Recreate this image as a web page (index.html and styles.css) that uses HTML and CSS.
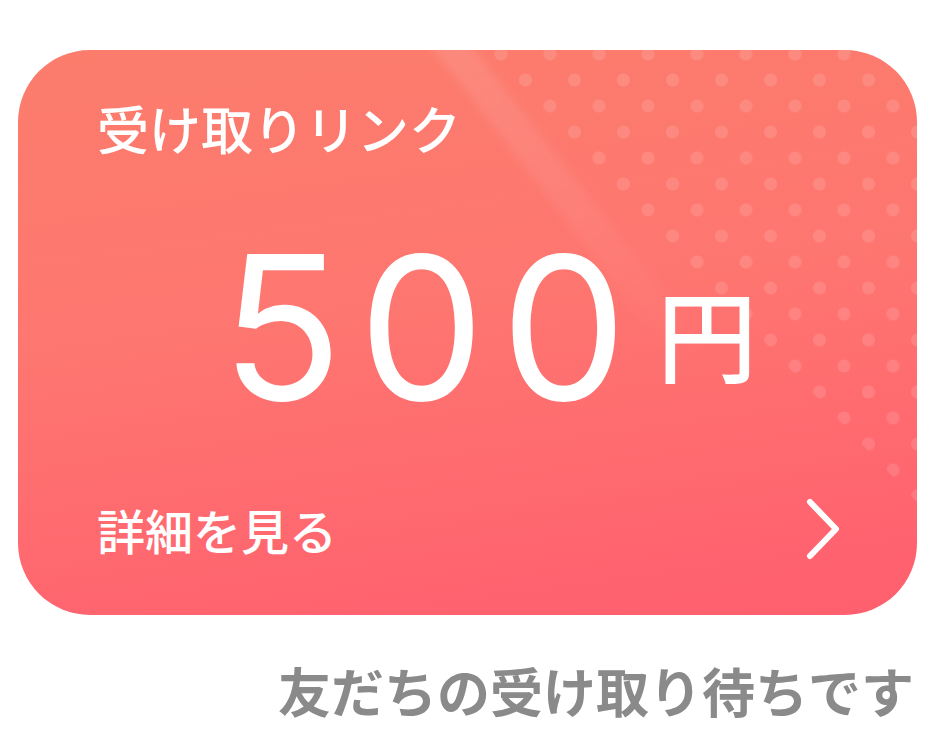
FILE: index.html
```html
<!DOCTYPE html>
<html lang="ja">
<head>
<meta charset="utf-8">
<link rel="stylesheet" href="styles.css">
</head>
<body>
<div class="card">
  <div class="dots"></div>
  <div class="streak"></div>
  <div class="title">受け取りリンク</div>
  <div class="amount"><span class="num">500</span><span class="yen">円</span></div>
  <div class="footer">
    <span class="more">詳細を見る</span>
    <svg class="chev" width="34" height="62" viewBox="0 0 34 62"><polyline points="4,4 30,31 4,58" fill="none" stroke="#fff" stroke-width="6" stroke-linecap="round" stroke-linejoin="round"/></svg>
  </div>
</div>
<p class="caption">友だちの受け取り待ちです</p>
</body>
</html>
```
FILE: styles.css
```css
html, body {
  margin: 0;
  padding: 0;
  background: #fff;
}
body {
  font-family: "Noto Sans CJK JP", "Noto Sans", sans-serif;
  width: 947px;
  height: 749px;
  overflow: hidden;
}
.card {
  position: relative;
  overflow: hidden;
  box-sizing: border-box;
  margin: 50px 0 0 18px;
  width: 899px;
  height: 565px;
  border-radius: 72px;
  padding: 52px 79px 55px 79px;
  display: flex;
  flex-direction: column;
  color: #fff;
  background: linear-gradient(172deg, #fb7d6c 0%, #fe7670 45%, #ff646f 85%, #ff5f6e 100%);
}
.dots {
  position: absolute;
  inset: 0;
  background-image:
    radial-gradient(circle, rgba(255,255,255,0.12) 6px, rgba(255,255,255,0) 7px),
    radial-gradient(circle, rgba(255,255,255,0.12) 6px, rgba(255,255,255,0) 7px);
  background-size: 49px 52px, 49px 52px;
  background-position: 17.5px 30px, 42px 4px;
  clip-path: polygon(468px 0, 100% 0, 100% 452px);
}
.streak {
  position: absolute;
  left: 408px;
  top: -10px;
  width: 32px;
  height: 420px;
  transform-origin: 0 0;
  transform: rotate(-38deg);
  background: linear-gradient(to bottom, rgba(255,255,255,0.11), rgba(255,255,255,0.06) 55%, rgba(255,255,255,0));
  filter: blur(4px);
}
.title {
  position: relative;
  font-size: 52px;
  line-height: 1;
  font-weight: 500;
}
.amount {
  position: relative;
  margin-top: 73px;
  margin-left: 124px;
  line-height: 1;
  white-space: nowrap;
}
.num {
  font-family: "Inter", "Liberation Sans", sans-serif;
  font-size: 200px;
  font-weight: 400;
  letter-spacing: 16px;
}
.yen {
  font-size: 100px;
  font-weight: 500;
  margin-left: 14px;
  vertical-align: 25px;
}
.footer {
  position: relative;
  margin-top: auto;
  display: flex;
  align-items: center;
  justify-content: space-between;
}
.more {
  font-size: 48px;
  line-height: 1;
  font-weight: 500;
}
.chev {
  display: block;
  margin-right: -2px;
}
.caption {
  margin: 49px 33px 0 0;
  text-align: right;
  font-size: 53px;
  line-height: 1;
  font-weight: 600;
  color: #8a8a8a;
}
```
